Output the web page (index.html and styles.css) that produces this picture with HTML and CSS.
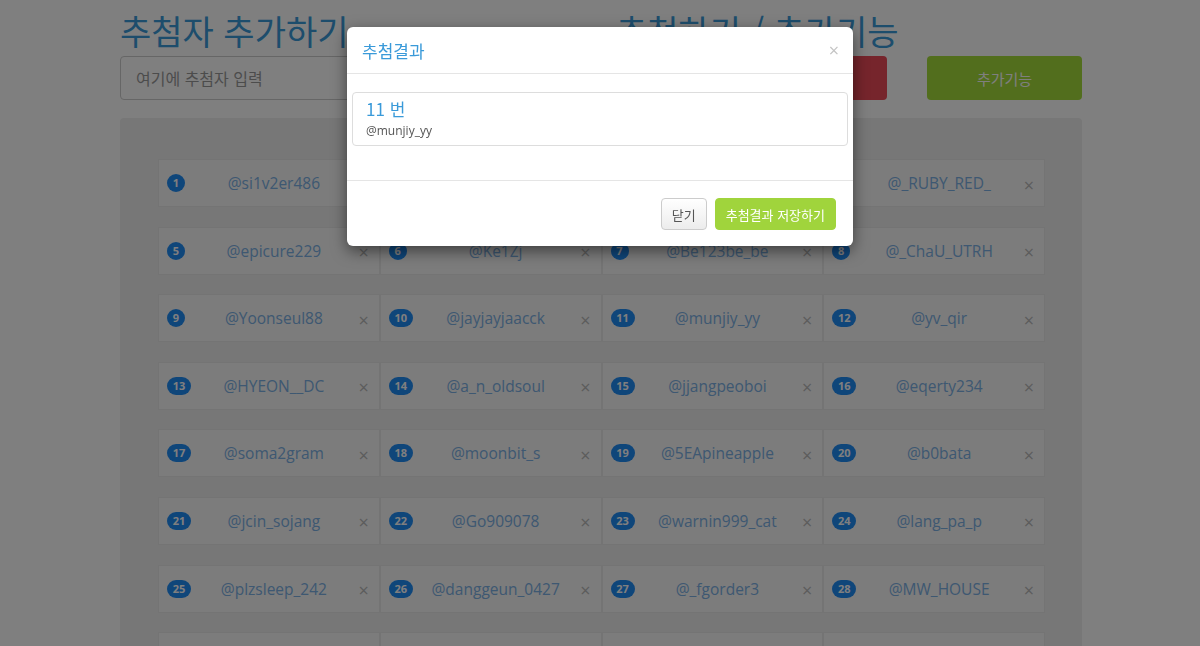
FILE: index.html
```html
<!DOCTYPE html>
<html lang="ko">
<head>
    <meta charset="UTF-8">
    <meta name="viewport" content="width=device-width, initial-scale=1.0">
    <title>추첨기</title>
    <link rel="stylesheet" href="styles.css">
</head>
<body class="modal-open">
    <div class="container">
        <div class="top">
            <div class="col-left">
                <h1>추첨자 추가하기</h1>
                <input type="text" class="form-input" placeholder="여기에 추첨자 입력">
            </div>
            <div class="col-right">
                <h1>추첨하기 / 추가기능</h1>
                <div class="btn-row">
                    <button class="btn btn-danger">추첨하기</button>
                    <button class="btn btn-lime">추가기능</button>
                </div>
            </div>
        </div>

        <div class="panel">
            <div class="card"><span class="badge">1</span><span class="name">@si1v2er486</span><span class="del">&times;</span></div>
            <div class="card"><span class="badge">2</span><span class="name">@lucky_two</span><span class="del">&times;</span></div>
            <div class="card"><span class="badge">3</span><span class="name">@third_pick</span><span class="del">&times;</span></div>
            <div class="card"><span class="badge">4</span><span class="name">@_RUBY_RED_</span><span class="del">&times;</span></div>

            <div class="card"><span class="badge">5</span><span class="name">@epicure229</span><span class="del">&times;</span></div>
            <div class="card"><span class="badge">6</span><span class="name">@Ke1Zj</span><span class="del">&times;</span></div>
            <div class="card"><span class="badge">7</span><span class="name">@Be123be_be</span><span class="del">&times;</span></div>
            <div class="card"><span class="badge">8</span><span class="name">@_ChaU_UTRH</span><span class="del">&times;</span></div>

            <div class="card"><span class="badge">9</span><span class="name">@Yoonseul88</span><span class="del">&times;</span></div>
            <div class="card"><span class="badge pill">10</span><span class="name">@jayjayjaacck</span><span class="del">&times;</span></div>
            <div class="card"><span class="badge pill">11</span><span class="name">@munjiy_yy</span><span class="del">&times;</span></div>
            <div class="card"><span class="badge pill">12</span><span class="name">@yv_qir</span><span class="del">&times;</span></div>

            <div class="card"><span class="badge pill">13</span><span class="name">@HYEON__DC</span><span class="del">&times;</span></div>
            <div class="card"><span class="badge pill">14</span><span class="name">@a_n_oldsoul</span><span class="del">&times;</span></div>
            <div class="card"><span class="badge pill">15</span><span class="name">@jjangpeoboi</span><span class="del">&times;</span></div>
            <div class="card"><span class="badge pill">16</span><span class="name">@eqerty234</span><span class="del">&times;</span></div>

            <div class="card"><span class="badge pill">17</span><span class="name">@soma2gram</span><span class="del">&times;</span></div>
            <div class="card"><span class="badge pill">18</span><span class="name">@moonbit_s</span><span class="del">&times;</span></div>
            <div class="card"><span class="badge pill">19</span><span class="name">@5EApineapple</span><span class="del">&times;</span></div>
            <div class="card"><span class="badge pill">20</span><span class="name">@b0bata</span><span class="del">&times;</span></div>

            <div class="card"><span class="badge pill">21</span><span class="name">@jcin_sojang</span><span class="del">&times;</span></div>
            <div class="card"><span class="badge pill">22</span><span class="name">@Go909078</span><span class="del">&times;</span></div>
            <div class="card"><span class="badge pill">23</span><span class="name">@warnin999_cat</span><span class="del">&times;</span></div>
            <div class="card"><span class="badge pill">24</span><span class="name">@lang_pa_p</span><span class="del">&times;</span></div>

            <div class="card"><span class="badge pill">25</span><span class="name">@plzsleep_242</span><span class="del">&times;</span></div>
            <div class="card"><span class="badge pill">26</span><span class="name">@danggeun_0427</span><span class="del">&times;</span></div>
            <div class="card"><span class="badge pill">27</span><span class="name">@_fgorder3</span><span class="del">&times;</span></div>
            <div class="card"><span class="badge pill">28</span><span class="name">@MW_HOUSE</span><span class="del">&times;</span></div>

            <div class="card"><span class="badge pill">29</span><span class="name">@guest_29</span><span class="del">&times;</span></div>
            <div class="card"><span class="badge pill">30</span><span class="name">@guest_30</span><span class="del">&times;</span></div>
            <div class="card"><span class="badge pill">31</span><span class="name">@guest_31</span><span class="del">&times;</span></div>
            <div class="card"><span class="badge pill">32</span><span class="name">@guest_32</span><span class="del">&times;</span></div>
        </div>
    </div>

    <div class="modal-backdrop"></div>
    <div class="modal">
        <div class="modal-dialog">
            <div class="modal-header">
                <h4 class="modal-title">추첨결과</h4>
                <span class="close">&times;</span>
            </div>
            <div class="modal-body">
                <div class="list-item">
                    <h4>11 번</h4>
                    <p>@munjiy_yy</p>
                </div>
            </div>
            <div class="modal-footer">
                <button class="btn btn-default">닫기</button>
                <button class="btn btn-save">추첨결과 저장하기</button>
            </div>
        </div>
    </div>
</body>
</html>
```

FILE: styles.css
```css
body {
    margin: 0;
    font-family: "Open Sans", "Noto Sans CJK KR", sans-serif;
    font-size: 14px;
    color: #333;
    background: #fff;
}
.modal-open {
    overflow: hidden;
}
.container {
    width: 962px;
    margin-left: 120px;
}
.top {
    display: flex;
    gap: 38px;
}
.col-left {
    width: 460px;
}
.col-right {
    flex: 1;
}
h1 {
    margin: 0 0 5px;
    padding-top: 11px;
    font-family: "Noto Sans CJK KR", sans-serif;
    font-size: 34px;
    font-weight: 400;
    line-height: 40px;
    color: #3a9ad9;
}
.col-right h1 {
    margin-left: -2px;
}
.form-input {
    box-sizing: border-box;
    width: 100%;
    height: 44px;
    padding: 0 15px;
    border: 1px solid #ccc;
    border-radius: 4px;
    font-family: "Noto Sans CJK KR", sans-serif;
    font-size: 16px;
}
.form-input::placeholder {
    color: #999;
}
.btn-row {
    display: flex;
    gap: 40px;
}
.btn {
    border: 1px solid transparent;
    border-radius: 4px;
    font-family: "Noto Sans CJK KR", sans-serif;
    cursor: pointer;
}
.btn-row .btn {
    height: 44px;
    font-size: 15px;
    color: #fff;
}
.btn-danger {
    flex: 1;
    background: #ec4a58;
}
.btn-lime {
    width: 155px;
    background: #a4dc3a;
}
.panel {
    display: grid;
    grid-template-columns: repeat(4, 1fr);
    row-gap: 19.6px;
    margin-top: 18px;
    padding: 41px 37px 40px 38px;
    background: #eeeeee;
    border-radius: 4px;
}
.card {
    display: flex;
    align-items: center;
    height: 48px;
    box-sizing: border-box;
    padding: 0 4px 0 8px;
    background: #f8f8f8;
    border: 1px solid #e9e9e9;
}
.badge {
    box-sizing: border-box;
    min-width: 18px;
    height: 18px;
    margin-right: 10px;
    border-radius: 9px;
    background: #1f8cf5;
    color: #fff;
    font-size: 11px;
    font-weight: 700;
    line-height: 18px;
    text-align: center;
}
.badge.pill {
    min-width: 24px;
    margin-right: 4px;
    padding: 0 5px;
}
.name {
    flex: 1;
    text-align: center;
    font-size: 15.5px;
    color: #7cb0e4;
}
.del {
    width: 22px;
    margin-top: 3px;
    text-align: center;
    font-size: 18px;
    color: #b8b8b8;
}
.modal-backdrop {
    position: fixed;
    top: 0;
    left: 0;
    right: 0;
    bottom: 0;
    background: rgba(0, 0, 0, 0.5);
}
.modal {
    position: fixed;
    top: 0;
    left: 0;
    right: 0;
}
.modal-dialog {
    width: 506px;
    margin: 27px auto 0;
    background: #fff;
    border-radius: 6px;
    box-shadow: 0 5px 15px rgba(0, 0, 0, 0.5);
    font-family: "Noto Sans CJK KR", sans-serif;
}
.modal-header {
    display: flex;
    justify-content: space-between;
    align-items: center;
    height: 46px;
    padding: 0 14px 0 15px;
    border-bottom: 1px solid #e5e5e5;
}
.modal-title {
    margin: 0;
    font-size: 17px;
    font-weight: 400;
    color: #3a9ad9;
}
.close {
    font-family: "Open Sans", sans-serif;
    font-size: 18px;
    line-height: 1;
    color: #c4c4c4;
}
.modal-body {
    padding: 18px 5px 34px;
}
.list-item {
    padding: 6px 13px;
    border: 1px solid #dddddd;
    border-radius: 4px;
}
.list-item h4 {
    margin: 0 0 3px;
    font-size: 17px;
    font-weight: 400;
    line-height: 20px;
    color: #3a9ad9;
}
.list-item p {
    margin: 0;
    font-family: "Open Sans", sans-serif;
    font-size: 12px;
    line-height: 17px;
    color: #555;
}
.modal-footer {
    display: flex;
    justify-content: flex-end;
    gap: 8px;
    padding: 17px 17px 16px;
    border-top: 1px solid #e5e5e5;
}
.modal-footer .btn {
    height: 32px;
    font-size: 13px;
}
.btn-default {
    padding: 0 10px;
    background: linear-gradient(#fff, #ececec);
    border-color: #ccc;
    color: #555;
}
.btn-save {
    padding: 0 10px;
    background: #a0d43c;
    border-color: #a0d43c;
    color: #fff;
}
```
